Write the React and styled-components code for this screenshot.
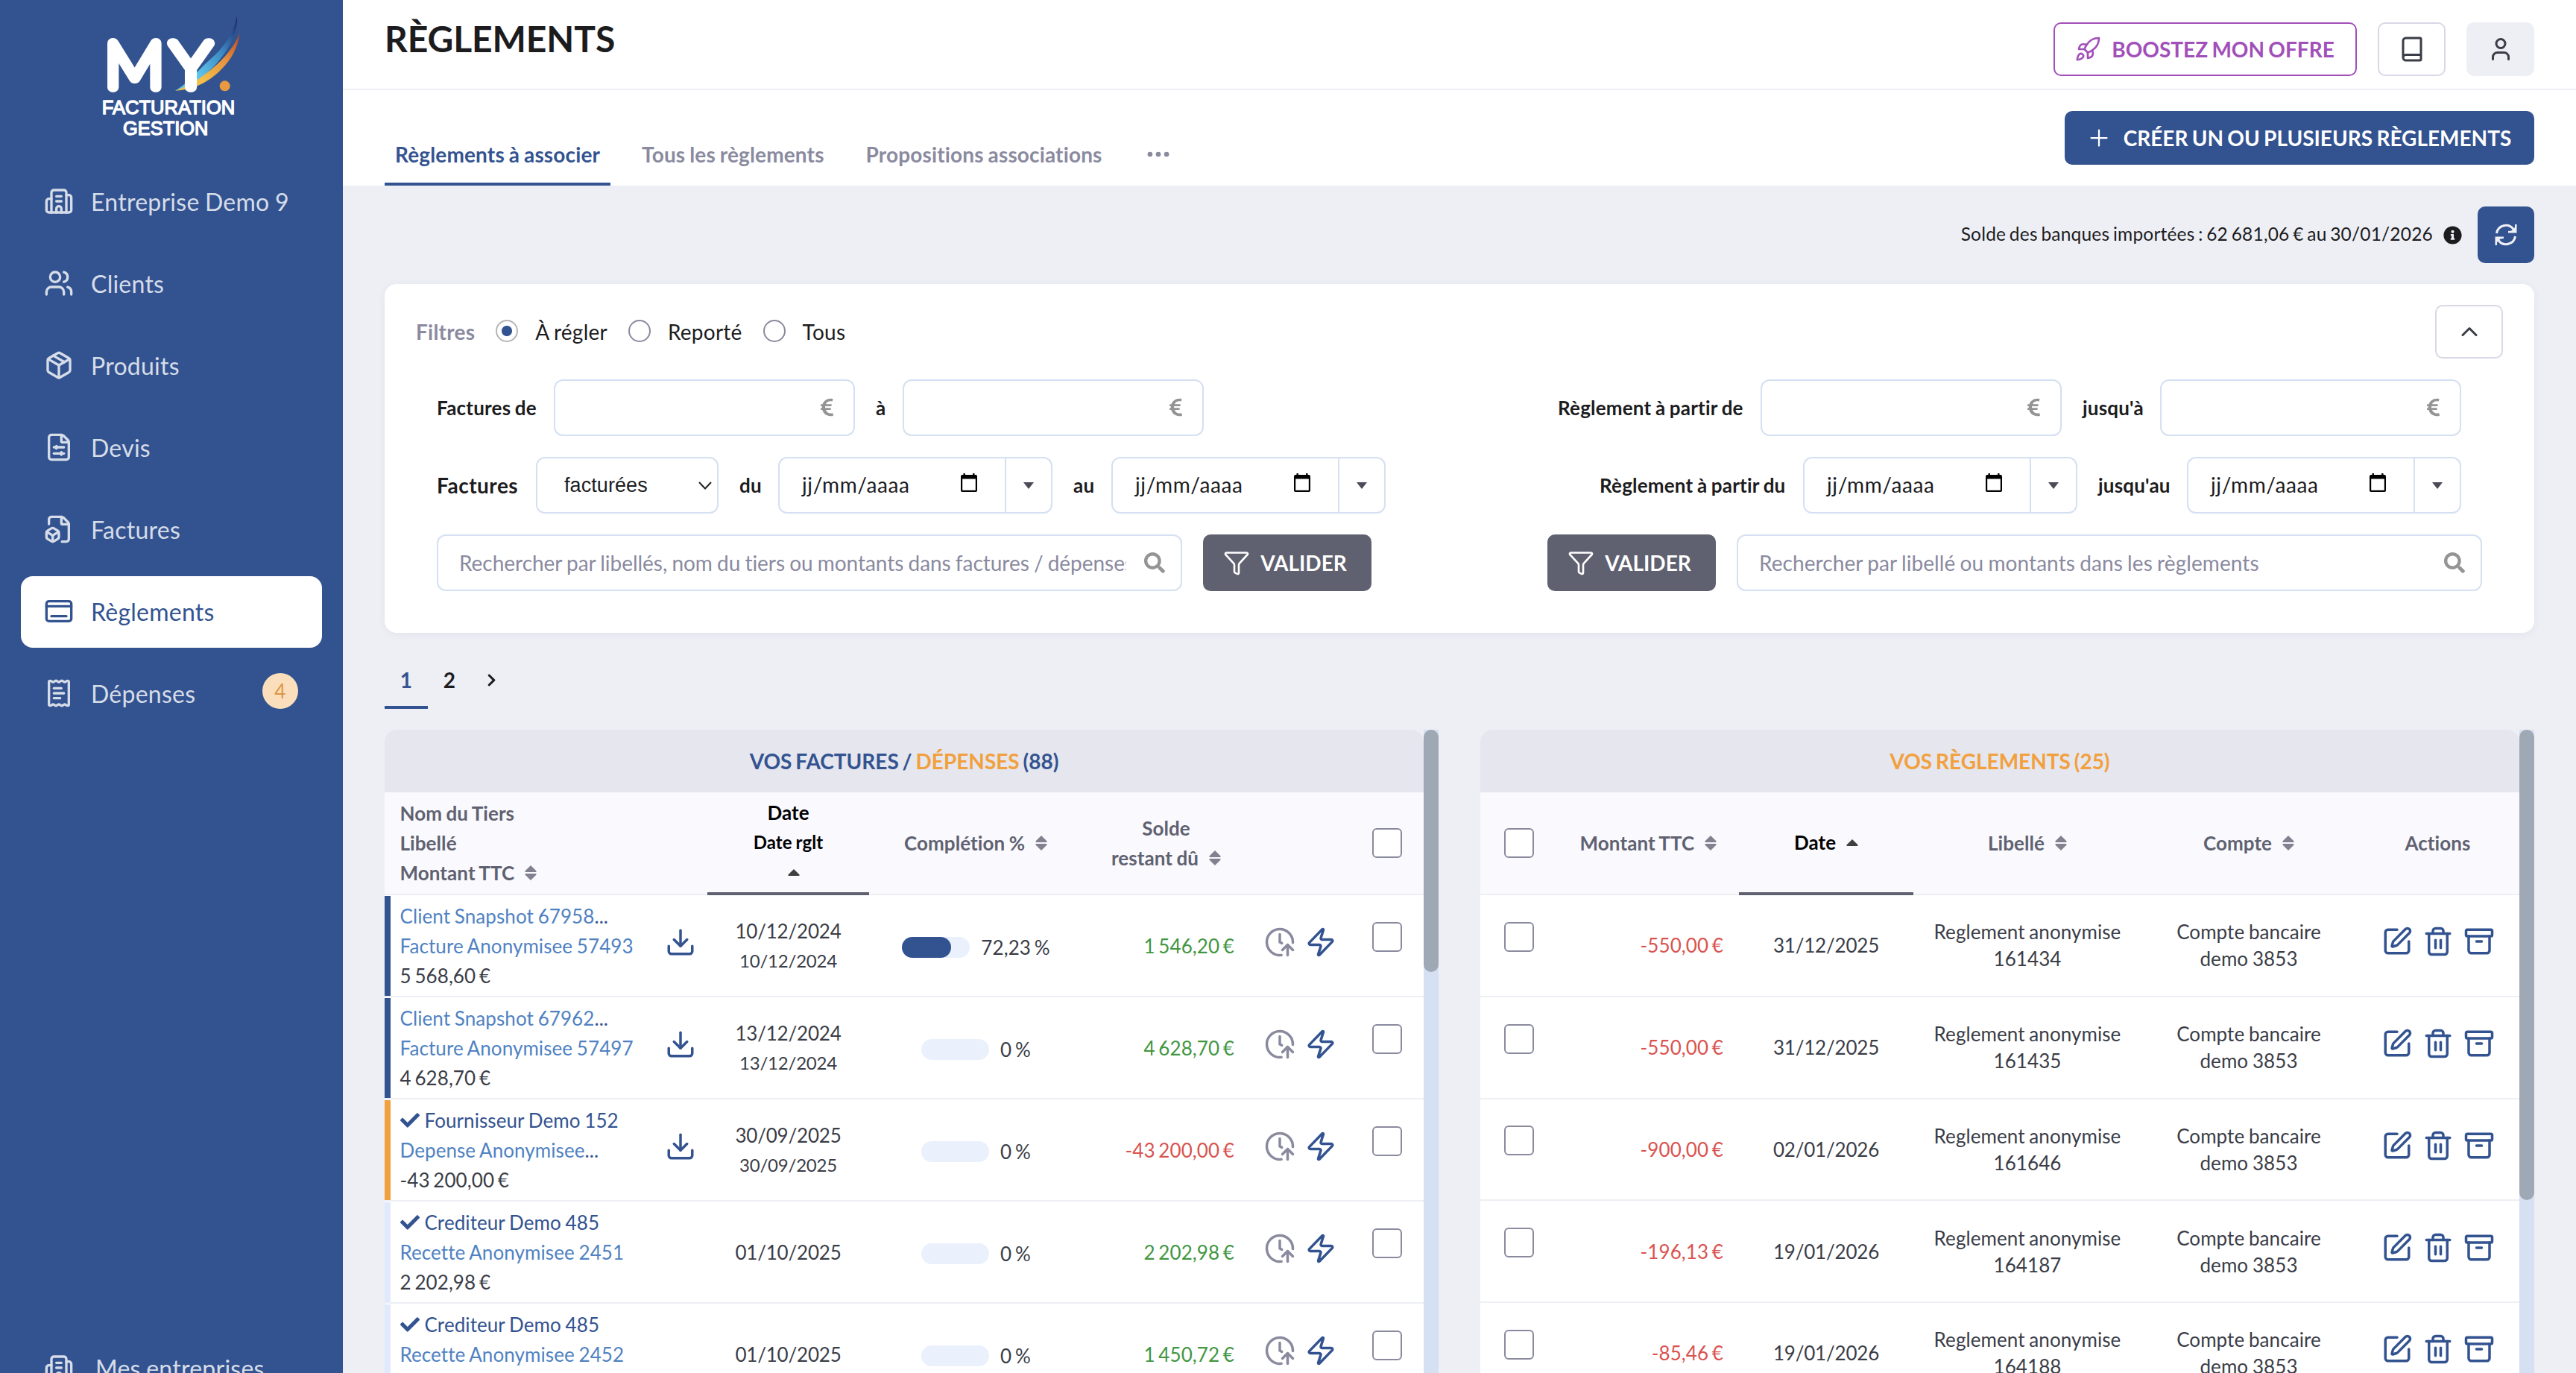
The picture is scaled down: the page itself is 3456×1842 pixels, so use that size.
import React, { useState } from "react";
import styled, { createGlobalStyle, css } from "styled-components";
import {
  Archive,
  Book,
  Building2,
  ChevronUp,
  ClockArrowUp,
  Dock,
  Download,
  Ellipsis,
  FileBox,
  FileSliders,
  Funnel,
  Package,
  Plus,
  ReceiptText,
  Rocket,
  SquarePen,
  Trash2,
  User,
  Users,
  Zap,
} from "lucide-react";
import {
  FaCheck,
  FaChevronRight,
  FaEuroSign,
  FaInfoCircle,
  FaSearch,
} from "react-icons/fa";

const GlobalStyle = createGlobalStyle`
  *, *::before, *::after {
    box-sizing: border-box;
  }

  body {
    margin: 0;
    overflow: hidden;
    background: #eeeff5;
    color: #1c1c1e;
    font-family: Lato, "Liberation Sans", sans-serif;
    font-size: 26px;
    letter-spacing: 0.08px;
    word-spacing: -1px;
  }

  button, input, select {
    font-family: inherit;
    margin: 0;
  }

  svg {
    display: block;
    flex: none;
  }
`;

const Layout = styled.div`
  display: flex;
  width: 3456px;
  height: 1842px;
  overflow: hidden;
`;

/* ---------- sidebar ---------- */

const Sidebar = styled.aside`
  flex: none;
  display: flex;
  flex-direction: column;
  width: 460px;
  height: 1884px;
  padding: 15px 28px 0;
  background: #335390;
`;

const LogoLink = styled.a`
  align-self: flex-start;
  margin: 0 0 33px 97px;
`;

const Nav = styled.nav`
  flex: 1;
  display: flex;
  flex-direction: column;
  gap: 14px;
`;

const NavItem = styled.a`
  display: flex;
  align-items: center;
  gap: ${({ $wide }) => ($wide ? 29 : 23)}px;
  height: 96px;
  padding: 0 32px 2px 31px;
  border-radius: 16px;
  font-size: 32px;
  letter-spacing: 0.25px;
  color: #d6dde9;
  ${({ $active }) =>
    $active &&
    css`
      background: #fff;
      color: #335390;
    `}
`;

const Badge = styled.span`
  display: flex;
  align-items: center;
  justify-content: center;
  width: 48px;
  height: 48px;
  margin: -6px 0 0 auto;
  border-radius: 50%;
  background: #fbdfbd;
  color: #dd9647;
  font-size: 26px;
`;

/* ---------- top bars ---------- */

const Main = styled.main`
  flex: 1;
  min-width: 0;
`;

const Header = styled.header`
  display: flex;
  justify-content: space-between;
  height: 121px;
  padding: 30px 56px 0;
  border-bottom: 2px solid #eeeff5;
  background: #fff;
`;

const Title = styled.h1`
  margin: -8px 0 0;
  font-size: 48px;
  line-height: 60px;
  font-weight: 700;
  letter-spacing: -0.1px;
`;

const HeaderActions = styled.div`
  display: flex;
  gap: 28px;
`;

const Button = styled.button`
  display: flex;
  align-items: center;
  justify-content: center;
  height: 72px;
  border: 0;
  border-radius: 10px;
  font-size: 28px;
  font-weight: 700;
  word-spacing: -1.5px;
  white-space: nowrap;
`;

const BoostButton = styled(Button)`
  gap: 14px;
  width: 407px;
  padding: 0 8px 0 6px;
  border: 2px solid #a14fb9;
  background: #fff;
  color: #a14fb9;
`;

const SquareButton = styled(Button)`
  width: 91px;
  border: 2px solid ${({ $filled }) => ($filled ? "#eeeff5" : "#d8d8e6")};
  background: ${({ $filled }) => ($filled ? "#eeeff5" : "#fff")};
  color: #3a3d47;
`;

const CreateButton = styled(Button)`
  gap: 15px;
  width: 630px;
  padding: 0 9px 0 6px;
  background: #335390;
  color: #fff;
`;

const TabBar = styled.div`
  display: flex;
  justify-content: space-between;
  height: 128px;
  padding: 28px 56px 0;
  background: #fff;
`;

const Tabs = styled.div`
  display: flex;
  gap: 28px;
  align-items: flex-end;
`;

const Tab = styled.a`
  display: flex;
  align-items: center;
  height: 84px;
  padding: 4px 14px 0;
  border-bottom: 4px solid ${({ $active }) => ($active ? "#335390" : "transparent")};
  color: ${({ $active }) => ($active ? "#335390" : "#8a8a9f")};
  font-size: 28px;
  font-weight: 700;
  letter-spacing: 0.14px;
`;

const Balance = styled.div`
  display: flex;
  align-items: center;
  justify-content: flex-end;
  gap: 14px;
  height: 132px;
  padding: 0 56px;
`;

const BalanceText = styled.span`
  padding-bottom: 4px;
  font-size: 24.5px;
  letter-spacing: 0.2px;
  word-spacing: -1.8px;
`;

const RefreshButton = styled(Button)`
  width: 76px;
  height: 76px;
  margin-left: 7px;
  background: #335390;
  color: #eeeff5;
`;

/* ---------- filters ---------- */

const FilterCard = styled.section`
  margin: 0 56px;
  padding: 28px 42px 56px;
  border-radius: 16px;
  background: #fff;
  box-shadow: 0 2px 12px rgba(60, 60, 100, 0.06);
`;

const FilterTop = styled.div`
  display: flex;
  align-items: center;
  justify-content: space-between;
`;

const RadioGroup = styled.div`
  display: flex;
  align-items: center;
  font-size: 28px;
  letter-spacing: 0.24px;
`;

const FilterTitle = styled.strong`
  color: #8a8a9f;
`;

const Radio = styled.label`
  display: flex;
  align-items: center;
  gap: 23px;
  margin-left: 28px;
`;

const RadioMark = styled.span`
  width: 30px;
  height: 30px;
  margin-top: -2px;
  border: 2px solid ${({ $checked }) => ($checked ? "#b4b4b4" : "#8a8a9f")};
  border-radius: 50%;
  background: ${({ $checked }) =>
    $checked ? "radial-gradient(circle, #335390 6.5px, #fff 7.5px)" : "#fff"};
`;

const FilterColumns = styled.div`
  display: flex;
  justify-content: space-between;
  padding: 0 28px;
`;

const FilterColumn = styled.div`
  display: flex;
  flex-direction: column;
  align-items: ${({ $end }) => ($end ? "flex-end" : "flex-start")};
`;

const FilterRow = styled.div`
  display: flex;
  align-items: center;
  height: 76px;
  margin-top: 28px;
  margin-right: ${({ $inset }) => ($inset ? 28 : 0)}px;
`;

const Label = styled.label`
  width: ${({ $width }) => $width}px;
  margin: 0 22px 0 ${({ $first }) => ($first ? 0 : 28)}px;
  font-size: ${({ $large }) => ($large ? 28 : 26)}px;
  letter-spacing: ${({ $large }) => ($large ? 0.5 : 0.2)}px;
  font-weight: 700;
  white-space: nowrap;
`;

const Field = styled.div`
  display: flex;
  align-items: center;
  width: ${({ $width }) => $width}px;
  height: 76px;
  border: 2px solid #d5e0f2;
  border-radius: 12px;
  background: #fff;
  overflow: hidden;
`;

const AmountField = styled(Field)`
  justify-content: flex-end;
  padding: 0 22px 1px 0;
  color: #949494;
`;

const SelectField = styled(Field)`
  justify-content: space-between;
  padding: 0 7px 0 36px;
  font-family: "Liberation Sans", Arial, sans-serif;
  font-size: 27px;
`;

const DateText = styled.span`
  flex: 1;
  padding: 0 0 2px 30px;
  font-size: 28px;
  letter-spacing: 0.6px;
`;

const DateToggle = styled.span`
  display: flex;
  align-items: center;
  justify-content: center;
  width: 62px;
  height: 100%;
  margin-left: 37px;
  border-left: 2px solid #d5e0f2;
`;

const SearchField = styled(Field)`
  padding: 0 21px 0 28px;
  gap: 24px;
  color: #949494;
`;

const SearchText = styled.span`
  flex: 1;
  overflow: hidden;
  white-space: nowrap;
  font-size: 28px;
  line-height: 40px;
  letter-spacing: ${({ $tight }) => ($tight ? -0.03 : 0.08)}px;
  color: #8a8a9f;
`;

const ValidateButton = styled(Button)`
  gap: 14px;
  width: 226px;
  height: 76px;
  padding: 0 8px 0 2px;
  margin: ${({ $before }) => ($before ? "0 28px 0 0" : "0 0 0 28px")};
  background: #606170;
  color: #fff;
`;

/* ---------- pagination ---------- */

const Pagination = styled.div`
  display: flex;
  height: 74px;
  margin: 28px 56px;
  font-weight: 700;
`;

const PageLink = styled.a`
  display: flex;
  align-items: center;
  justify-content: center;
  width: 58px;
  border-bottom: 4px solid ${({ $active }) => ($active ? "#335390" : "transparent")};
  color: ${({ $active }) => ($active ? "#335390" : "#1c1c1e")};
  font-size: 28px;
`;

const NextLink = styled(PageLink)`
  width: 55px;
`;

/* ---------- tables ---------- */

const Tables = styled.div`
  display: flex;
  justify-content: space-between;
  margin: 0 56px;
`;

const TablePane = styled.section`
  display: flex;
  height: 900px;
`;

const Table = styled.div`
  width: 1394px;
  overflow: hidden;
  border-radius: 16px 16px 0 0;
  background: #fff;
`;

const ScrollTrack = styled.div`
  width: 20px;
  background: #d5e0f2;
`;

const ScrollThumb = styled.div`
  height: ${({ $length }) => $length}px;
  border-radius: 10px;
  background: #9fa9b5;
`;

const TableTitle = styled.div`
  display: flex;
  align-items: center;
  justify-content: center;
  height: 84px;
  background: #e5e6ee;
  color: ${({ $accent }) => ($accent ? "#f2a03d" : "#335390")};
  font-size: 28px;
  font-weight: 700;
  letter-spacing: 0;
  word-spacing: -2px;
`;

const Accent = styled.span`
  color: #f2a03d;
`;

const gridLeft = css`
  grid-template-columns: 361px 72px 217px 286px 225px 135px 1fr;
`;

const gridRight = css`
  grid-template-columns: 104px 243px 234px 306px 288px 1fr;
`;

const HeadRow = styled.div`
  display: grid;
  ${({ $side }) => ($side === "left" ? gridLeft : gridRight)}
  height: 138px;
  background: #f9f9fe;
  box-shadow: inset 0 -2px #eeeff5;
  font-weight: 700;
  line-height: 40px;
  color: #606170;
`;

const HeadCell = styled.div`
  display: flex;
  flex-direction: column;
  align-items: ${({ $start }) => ($start ? "flex-start" : "center")};
  justify-content: center;
  padding-bottom: 3px;
  padding-left: ${({ $start }) => ($start ? 20.5 : 0)}px;
  grid-column: span ${({ $span }) => $span || 1};
  ${({ $sorted }) =>
    $sorted &&
    css`
      padding-bottom: 0;
      border-bottom: 4px solid #606170;
      color: #000;
    `}
`;

const HeadLine = styled.span`
  display: flex;
  align-items: center;
  gap: 14px;
  height: 40px;
  padding-left: ${({ $indent }) => $indent || 0}px;
  font-size: ${({ $small }) => ($small ? 24 : 26)}px;
  white-space: nowrap;
`;

const rowTones = {
  facture: "#335390",
  depense: "#f2a03d",
  recette: "#e1eafc",
};

const Row = styled.div`
  display: grid;
  ${({ $side }) => ($side === "left" ? gridLeft : gridRight)}
  height: ${({ $side }) => ($side === "left" ? 137 : 136.75)}px;
  border-bottom: 2px solid #eeeff5;
  color: #3a3d47;
`;

const Party = styled.div`
  display: flex;
  flex-direction: column;
  justify-content: center;
  margin-top: 1px;
  padding: 0 0 1px 12.5px;
  border-left: 8px solid ${({ $tone }) => rowTones[$tone]};
  line-height: 40px;
  white-space: nowrap;
`;

const PartyName = styled.span`
  display: flex;
  align-items: center;
  gap: 7px;
  color: ${({ $known }) => ($known ? "#335390" : "#5082c2")};
`;

const DocLink = styled.span`
  color: #5082c2;
`;

const Dots = styled.span`
  color: #335390;
  ${PartyName} & {
    margin-left: -7px;
  }
`;

const Money = styled.span`
  word-spacing: -2px;
`;

const Cell = styled.div`
  display: flex;
  align-items: center;
  justify-content: center;
`;

const DateCell = styled(Cell)`
  flex-direction: column;
  line-height: 40px;
  letter-spacing: -0.2px;
`;

const IconCell = styled(Cell)`
  gap: 13px;
  padding-bottom: 10px;
  color: #335390;
`;

const CheckCell = styled(Cell)`
  padding-bottom: ${({ $head }) => ($head ? 2 : 23)}px;
`;

const StackCell = styled(Cell)`
  flex-direction: column;
  line-height: 36px;
`;

const SmallDate = styled.span`
  font-size: 24px;
`;

const ProgressCell = styled(Cell)`
  gap: 15px;
  padding: 5px 0 0 1px;
  word-spacing: -2px;
`;

const ProgressTrack = styled.div`
  width: 91px;
  height: 28px;
  border-radius: 14px;
  background: #eaf1fd;
`;

const ProgressFill = styled.div`
  height: 28px;
  border-radius: 14px;
  background: #335390;
`;

const AmountCell = styled(Cell)`
  justify-content: flex-end;
  padding-right: 21px;
  color: ${({ $negative }) => ($negative ? "#d9534f" : "#419641")};
`;

const Checkbox = styled.span`
  width: 40px;
  height: 40px;
  border: 2px solid #8a8a9f;
  border-radius: 6px;
  background: #fff;
`;

/* ---------- small drawings ---------- */

function Logo() {
  return (
    <svg width="210" height="175" viewBox="0 0 630 525">
      <defs>
        <linearGradient id="swooshBlue" x1="0" y1="1" x2="1" y2="0">
          <stop offset="0.3" stopColor="#5cc4ea" />
          <stop offset="0.65" stopColor="#3b86c0" />
          <stop offset="1" stopColor="#1d2468" />
        </linearGradient>
        <linearGradient id="swooshOrange" x1="0" y1="1" x2="1" y2="0">
          <stop offset="0.3" stopColor="#f2c04a" />
          <stop offset="0.65" stopColor="#e69340" />
          <stop offset="1" stopColor="#b8451f" />
        </linearGradient>
      </defs>
      <path
        d="M578 20 C568 80 530 145 470 195 C425 235 380 290 330 320 C400 300 465 250 505 200 C555 140 585 80 578 20Z"
        fill="url(#swooshBlue)"
      />
      <path
        d="M590 88 C570 140 530 190 475 235 C430 270 390 300 330 320 C390 318 450 295 505 245 C560 195 582 145 590 88Z"
        fill="url(#swooshOrange)"
      />
      <g
        fill="#fff"
        stroke="#fff"
        strokeWidth="41"
        strokeLinejoin="round"
        strokeLinecap="round"
        fontFamily="Lato"
        fontWeight="100"
        fontSize="252"
      >
        <text x="48" y="305" textLength="236" lengthAdjust="spacingAndGlyphs">
          M
        </text>
        <text x="314" y="305" textLength="158" lengthAdjust="spacingAndGlyphs">
          Y
        </text>
      </g>
      <circle cx="530" cy="301" r="21" fill="#e99a41" />
      <g
        fill="#fff"
        stroke="#fff"
        strokeWidth="4"
        fontFamily="Liberation Sans"
        fontSize="75"
      >
        <text x="35" y="415" textLength="536" lengthAdjust="spacingAndGlyphs">
          FACTURATION
        </text>
        <text x="120" y="497" textLength="343" lengthAdjust="spacingAndGlyphs">
          GESTION
        </text>
      </g>
    </svg>
  );
}

const SortIcon = () => (
  <svg width="16" height="20" viewBox="0 0 16 20" fill="#83808f">
    <path d="M8 0 15.6 7.4Q16 9 14.5 9H1.5Q0 9 .4 7.4Z" />
    <path d="M8 20 15.6 12.6Q16 11 14.5 11H1.5Q0 11 .4 12.6Z" />
  </svg>
);

const CaretUp = () => (
  <svg width="16" height="9" viewBox="0 0 16 9" fill="#3f3f3f">
    <path d="M8 0 15.6 7.4Q16 9 14.5 9H1.5Q0 9 .4 7.4Z" />
  </svg>
);

const CaretDown = () => (
  <svg width="14" height="9" viewBox="0 0 14 9" fill="#4a4b57">
    <path d="M0 0H14L7 9Z" />
  </svg>
);

const CalendarIcon = () => (
  <svg width="22" height="32" viewBox="0 0 22 32">
    <path
      d="M3.5 0h2.4v2h10.200V0h2.4v2H20q2 0 2 2v19q0 2-2 2H2q-2 0-2-2V4q0-2 2-2h1.500ZM2.200 7.500V22.800H19.800V7.500Z"
      fillRule="evenodd"
    />
  </svg>
);

const SelectChevron = () => (
  <svg width="18" height="11" viewBox="0 0 18 11" fill="none" stroke="#222" strokeWidth="2">
    <path d="M1 1 9 9.500 17 1" />
  </svg>
);

const RefreshIcon = () => (
  <svg width="30" height="30" viewBox="0 0 30 30" fill="none" stroke="currentColor" strokeWidth="3">
    <path d="M2.500 13A12.500 12.500 0 0 1 25 7.500" />
    <path d="M27.500 17A12.500 12.500 0 0 1 5 22.500" />
    <path
      d="M29.500 1V12.500H18V10L22.500 9.500 27 5V1ZM.5 29V17.500H12V20L7.500 20.500 3 25V29Z"
      fill="currentColor"
      stroke="none"
    />
  </svg>
);

/* ---------- data ---------- */

const navItems = [
  { label: "Entreprise Demo 9", icon: Building2 },
  { label: "Clients", icon: Users },
  { label: "Produits", icon: Package },
  { label: "Devis", icon: FileSliders },
  { label: "Factures", icon: FileBox },
  { label: "Règlements", icon: Dock, active: true },
  { label: "Dépenses", icon: ReceiptText, badge: 4 },
];

const invoices = [
  { tone: "facture", name: "Client Snapshot 67958", cutName: true, doc: "Facture Anonymisee 57493", total: "5 568,60 €", date: "10/12/2024", due: "10/12/2024", file: true, done: 72.23, rest: "1 546,20 €" },
  { tone: "facture", name: "Client Snapshot 67962", cutName: true, doc: "Facture Anonymisee 57497", total: "4 628,70 €", date: "13/12/2024", due: "13/12/2024", file: true, done: 0, rest: "4 628,70 €" },
  { tone: "depense", known: true, name: "Fournisseur Demo 152", doc: "Depense Anonymisee", cutDoc: true, total: "-43 200,00 €", date: "30/09/2025", due: "30/09/2025", file: true, done: 0, rest: "-43 200,00 €" },
  { tone: "recette", known: true, name: "Crediteur Demo 485", doc: "Recette Anonymisee 2451", total: "2 202,98 €", date: "01/10/2025", done: 0, rest: "2 202,98 €" },
  { tone: "recette", known: true, name: "Crediteur Demo 485", doc: "Recette Anonymisee 2452", total: "1 450,72 €", date: "01/10/2025", done: 0, rest: "1 450,72 €" },
];

const payments = [
  { amount: "-550,00 €", date: "31/12/2025", ref: "161434" },
  { amount: "-550,00 €", date: "31/12/2025", ref: "161435" },
  { amount: "-900,00 €", date: "02/01/2026", ref: "161646" },
  { amount: "-196,13 €", date: "19/01/2026", ref: "164187" },
  { amount: "-85,46 €", date: "19/01/2026", ref: "164188" },
];

/* ---------- blocks ---------- */

function DateInput() {
  return (
    <Field $width={368}>
      <DateText>jj/mm/aaaa</DateText>
      <CalendarIcon />
      <DateToggle>
        <CaretDown />
      </DateToggle>
    </Field>
  );
}

function AmountInput() {
  return (
    <AmountField $width={404}>
      <FaEuroSign size={27} />
    </AmountField>
  );
}

function Validate({ before }) {
  return (
    <ValidateButton $before={before}>
      <Funnel size={36} strokeWidth={1.75} />
      VALIDER
    </ValidateButton>
  );
}

function Filters() {
  const [status, setStatus] = useState("À régler");

  return (
    <FilterCard>
      <FilterTop>
        <RadioGroup>
          <FilterTitle>Filtres</FilterTitle>
          {["À régler", "Reporté", "Tous"].map((name) => (
            <Radio key={name} onClick={() => setStatus(name)}>
              <RadioMark $checked={status === name} />
              {name}
            </Radio>
          ))}
        </RadioGroup>
        <SquareButton>
          <ChevronUp size={36} />
        </SquareButton>
      </FilterTop>
      <FilterColumns>
        <FilterColumn>
          <FilterRow>
            <Label $first $width={135}>Factures de</Label>
            <AmountInput />
            <Label $width={14}>à</Label>
            <AmountInput />
          </FilterRow>
          <FilterRow>
            <Label $first $large $width={111}>Factures</Label>
            <SelectField $width={245}>
              facturées
              <SelectChevron />
            </SelectField>
            <Label $width={30}>du</Label>
            <DateInput />
            <Label $width={29}>au</Label>
            <DateInput />
          </FilterRow>
          <FilterRow>
            <SearchField $width={1000}>
              <SearchText $tight>
                Rechercher par libellés, nom du tiers ou montants dans factures / dépenses
              </SearchText>
              <FaSearch size={28} />
            </SearchField>
            <Validate />
          </FilterRow>
        </FilterColumn>
        <FilterColumn $end>
          <FilterRow $inset>
            <Label $width={250}>Règlement à partir de</Label>
            <AmountInput />
            <Label $width={82}>jusqu'à</Label>
            <AmountInput />
          </FilterRow>
          <FilterRow $inset>
            <Label $width={251}>Règlement à partir du</Label>
            <DateInput />
            <Label $width={97}>jusqu'au</Label>
            <DateInput />
          </FilterRow>
          <FilterRow>
            <Validate before />
            <SearchField $width={1000}>
              <SearchText>Rechercher par libellé ou montants dans les règlements</SearchText>
              <FaSearch size={28} />
            </SearchField>
          </FilterRow>
        </FilterColumn>
      </FilterColumns>
    </FilterCard>
  );
}

function InvoicesTable() {
  return (
    <TablePane>
      <Table>
        <TableTitle>
          <span>
            VOS FACTURES / <Accent>DÉPENSES</Accent> (88)
          </span>
        </TableTitle>
        <HeadRow $side="left">
          <HeadCell $start $span={2}>
            <HeadLine>Nom du Tiers</HeadLine>
            <HeadLine>Libellé</HeadLine>
            <HeadLine>
              Montant TTC <SortIcon />
            </HeadLine>
          </HeadCell>
          <HeadCell $sorted>
            <HeadLine>Date</HeadLine>
            <HeadLine $small>Date rglt</HeadLine>
            <HeadLine $indent={14}>
              <CaretUp />
            </HeadLine>
          </HeadCell>
          <HeadCell>
            <HeadLine>
              Complétion % <SortIcon />
            </HeadLine>
          </HeadCell>
          <HeadCell>
            <HeadLine>Solde</HeadLine>
            <HeadLine>
              restant dû <SortIcon />
            </HeadLine>
          </HeadCell>
          <HeadCell />
          <CheckCell $head>
            <Checkbox />
          </CheckCell>
        </HeadRow>
        {invoices.map((row) => (
          <Row $side="left" key={row.doc + row.total}>
            <Party $tone={row.tone}>
              <PartyName $known={row.known}>
                {row.known && <FaCheck size={26} />}
                {row.name}
                {row.cutName && <Dots>...</Dots>}
              </PartyName>
              <DocLink>
                {row.doc}
                {row.cutDoc && <Dots>...</Dots>}
              </DocLink>
              <Money>{row.total}</Money>
            </Party>
            <IconCell>{row.file && <Download size={42} />}</IconCell>
            <DateCell>
              <span>{row.date}</span>
              {row.due && <SmallDate>{row.due}</SmallDate>}
            </DateCell>
            <ProgressCell>
              <ProgressTrack>
                <ProgressFill style={{ width: `${row.done}%` }} />
              </ProgressTrack>
              {String(row.done).replace(".", ",")} %
            </ProgressCell>
            <AmountCell $negative={row.rest.startsWith("-")}>
              <Money>{row.rest}</Money>
            </AmountCell>
            <IconCell>
              <ClockArrowUp size={42} color="#8a8a9f" />
              <Zap size={42} />
            </IconCell>
            <CheckCell>
              <Checkbox />
            </CheckCell>
          </Row>
        ))}
      </Table>
      <ScrollTrack>
        <ScrollThumb $length={325} />
      </ScrollTrack>
    </TablePane>
  );
}

function PaymentsTable() {
  return (
    <TablePane>
      <Table>
        <TableTitle $accent>VOS RÈGLEMENTS (25)</TableTitle>
        <HeadRow $side="right">
          <CheckCell $head>
            <Checkbox />
          </CheckCell>
          <HeadCell>
            <HeadLine>
              Montant TTC <SortIcon />
            </HeadLine>
          </HeadCell>
          <HeadCell $sorted>
            <HeadLine>
              Date <CaretUp />
            </HeadLine>
          </HeadCell>
          <HeadCell>
            <HeadLine>
              Libellé <SortIcon />
            </HeadLine>
          </HeadCell>
          <HeadCell>
            <HeadLine>
              Compte <SortIcon />
            </HeadLine>
          </HeadCell>
          <HeadCell>
            <HeadLine>Actions</HeadLine>
          </HeadCell>
        </HeadRow>
        {payments.map((row) => (
          <Row $side="right" key={row.ref}>
            <CheckCell>
              <Checkbox />
            </CheckCell>
            <AmountCell $negative>
              <Money>{row.amount}</Money>
            </AmountCell>
            <DateCell>{row.date}</DateCell>
            <StackCell>
              <span>Reglement anonymise</span>
              <span>{row.ref}</span>
            </StackCell>
            <StackCell>
              <span>Compte bancaire</span>
              <span>demo 3853</span>
            </StackCell>
            <IconCell>
              <SquarePen size={42} />
              <Trash2 size={42} />
              <Archive size={42} />
            </IconCell>
          </Row>
        ))}
      </Table>
      <ScrollTrack>
        <ScrollThumb $length={631} />
      </ScrollTrack>
    </TablePane>
  );
}

function App() {
  return (
    <>
      <GlobalStyle />
      <Layout>
        <Sidebar>
          <LogoLink>
            <Logo />
          </LogoLink>
          <Nav>
            {navItems.map(({ label, icon: Icon, active, badge }) => (
              <NavItem key={label} $active={active}>
                <Icon size={40} />
                {label}
                {badge && <Badge>{badge}</Badge>}
              </NavItem>
            ))}
          </Nav>
          <NavItem $wide>
            <Building2 size={40} />
            Mes entreprises
          </NavItem>
        </Sidebar>
        <Main>
          <Header>
            <Title>RÈGLEMENTS</Title>
            <HeaderActions>
              <BoostButton>
                <Rocket size={36} strokeWidth={1.75} />
                BOOSTEZ MON OFFRE
              </BoostButton>
              <SquareButton>
                <Book size={36} />
              </SquareButton>
              <SquareButton $filled>
                <User size={36} />
              </SquareButton>
            </HeaderActions>
          </Header>
          <TabBar>
            <Tabs>
              <Tab $active>Règlements à associer</Tab>
              <Tab>Tous les règlements</Tab>
              <Tab>Propositions associations</Tab>
              <Tab>
                <Ellipsis size={38} strokeWidth={2.2} />
              </Tab>
            </Tabs>
            <CreateButton>
              <Plus size={36} strokeWidth={1.5} />
              CRÉER UN OU PLUSIEURS RÈGLEMENTS
            </CreateButton>
          </TabBar>
          <Balance>
            <BalanceText>Solde des banques importées : 62 681,06 € au 30/01/2026</BalanceText>
            <FaInfoCircle size={25} />
            <RefreshButton>
              <RefreshIcon />
            </RefreshButton>
          </Balance>
          <Filters />
          <Pagination>
            <PageLink $active>1</PageLink>
            <PageLink>2</PageLink>
            <NextLink>
              <FaChevronRight size={19} />
            </NextLink>
          </Pagination>
          <Tables>
            <InvoicesTable />
            <PaymentsTable />
          </Tables>
        </Main>
      </Layout>
    </>
  );
}

export default App;
